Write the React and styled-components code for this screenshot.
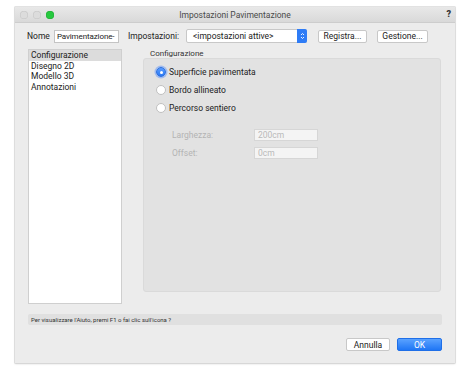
import React from 'react';
import styled, { createGlobalStyle } from 'styled-components';

const Global = createGlobalStyle`
  html, body { margin: 0; padding: 0; background: #ffffff; }
  body { font-family: Roboto, "Liberation Sans", sans-serif; color: #222; }
`;

const Page = styled.div`
  width: 468px;
  height: 373px;
  padding: 7px 0 0 15px;
  box-sizing: border-box;
`;

const Window = styled.div`
  width: 440px;
  height: 356px;
  background: #ececec;
  display: flex;
  flex-direction: column;
  box-shadow: 0 0 0 0.5px #c8c8c8, 0 1px 2px rgba(0, 0, 0, 0.15);
`;

const TitleBar = styled.div`
  height: 15px;
  flex-shrink: 0;
  display: flex;
  align-items: center;
  position: relative;
  background: linear-gradient(#e8e8e8, #d9d9d9);
  border-bottom: 1px solid #cdcdcd;
  padding-left: 5px;
  gap: 5px;
`;

const Light = styled.span`
  width: 8px;
  height: 8px;
  border-radius: 50%;
  background: ${(p) => p.$color};
  box-shadow: inset 0 0 0 0.5px ${(p) => p.$edge};
`;

const Title = styled.div`
  position: absolute;
  left: 0;
  right: 0;
  text-align: center;
  font-size: 8.5px;
  color: #4a4a4a;
  pointer-events: none;
`;

const HelpMark = styled.span`
  position: absolute;
  right: 4px;
  top: 2px;
  font-size: 9px;
  font-weight: 900;
  color: #333;
`;

const Body = styled.div`
  flex: 1;
  display: flex;
  flex-direction: column;
  padding: 6px 12px 0 12px;
`;

const TopRow = styled.div`
  display: flex;
  align-items: center;
  height: 14px;
  font-size: 8.5px;
`;

const Label = styled.span`
  color: #222;
  margin-left: ${(p) => p.$ml || 0}px;
  margin-right: ${(p) => p.$gap || 0}px;
`;

const TextBox = styled.div`
  width: ${(p) => p.$w}px;
  height: 13px;
  background: #fff;
  border: 1px solid #c4c4c4;
  box-sizing: border-box;
  display: flex;
  align-items: center;
  padding-left: 2px;
  font-size: 8px;
  letter-spacing: -0.1px;
  overflow: hidden;
  white-space: nowrap;
`;

const Select = styled.div`
  width: 121px;
  height: 14px;
  margin-left: 7px;
  background: #fff;
  border: 1px solid #c8c8c8;
  border-radius: 2px;
  box-sizing: border-box;
  display: flex;
  align-items: center;
  font-size: 8.5px;
  padding-left: 6px;
  position: relative;
`;

const Stepper = styled.span`
  position: absolute;
  right: -1px;
  top: -1px;
  bottom: -1px;
  width: 10px;
  background: #2f7cf6;
  border-radius: 0 2px 2px 0;
  display: flex;
  align-items: center;
  justify-content: center;
`;

const PushButton = styled.div`
  height: 13px;
  width: ${(p) => p.$w}px;
  margin-left: ${(p) => p.$ml}px;
  background: ${(p) => (p.$primary ? 'linear-gradient(#5aa2ff, #1f76f5)' : '#fff')};
  color: ${(p) => (p.$primary ? '#fff' : '#222')};
  border: 1px solid ${(p) => (p.$primary ? '#1f6fe8' : '#c8c8c8')};
  border-radius: 2px;
  box-sizing: border-box;
  display: flex;
  align-items: center;
  justify-content: center;
  font-size: 8.5px;
`;

const Main = styled.div`
  display: flex;
  margin-top: 6px;
`;

const List = styled.div`
  width: 94px;
  height: 255px;
  margin-left: 1px;
  background: #fff;
  border: 1px solid #cfcfcf;
  box-sizing: border-box;
  font-size: 8.5px;
`;

const ListItem = styled.div`
  height: 10.5px;
  line-height: 10.5px;
  padding-left: 2px;
  background: ${(p) => (p.$selected ? '#dcdcdc' : 'transparent')};
`;

const RightCol = styled.div`
  margin-left: 21px;
  display: flex;
  flex-direction: column;
`;

const GroupLabel = styled.div`
  font-size: 8px;
  height: 9px;
  line-height: 9px;
  padding-left: 7px;
  color: #333;
`;

const Group = styled.div`
  width: 298px;
  height: 234px;
  background: #e2e2e2;
  border-radius: 3px;
  border: 1px solid #dadada;
  box-sizing: border-box;
  padding: 8px 0 0 12px;
  display: flex;
  flex-direction: column;
`;

const RadioRow = styled.div`
  display: flex;
  align-items: center;
  height: 10px;
  margin-bottom: 8px;
  font-size: 8.5px;
`;

const Radio = styled.span`
  width: 10px;
  height: 10px;
  border-radius: 50%;
  box-sizing: border-box;
  margin-right: 3px;
  display: flex;
  align-items: center;
  justify-content: center;
  background: ${(p) => (p.$on ? 'linear-gradient(#5a9dff, #2a78f3)' : '#fff')};
  border: 1px solid ${(p) => (p.$on ? '#2a6fe0' : '#c0c0c0')};
  box-shadow: ${(p) => (p.$on ? '0 0 0 1.5px rgba(80,140,255,0.45)' : 'none')};
  &::after {
    content: '';
    width: 3px;
    height: 3px;
    border-radius: 50%;
    background: #fff;
    display: ${(p) => (p.$on ? 'block' : 'none')};
  }
`;

const Spacer = styled.div`
  height: ${(p) => p.$h}px;
`;

const FieldRow = styled.div`
  display: flex;
  align-items: center;
  height: 12px;
  margin-left: 16px;
  margin-bottom: 6px;
  font-size: 8.5px;
  color: #b4b4b4;
`;

const FieldLabel = styled.span`
  width: 82px;
`;

const DisabledBox = styled.div`
  width: 64px;
  height: 12px;
  background: #f4f4f4;
  border: 1px solid #d6d6d6;
  box-sizing: border-box;
  padding-left: 3px;
  display: flex;
  align-items: center;
  color: #b9b9b9;
`;

const HelpBar = styled.div`
  margin: 10px 0 0 1px;
  width: 414px;
  height: 11px;
  background: #e0e0e0;
  border-radius: 2px;
  font-size: 6px;
  padding-left: 3px;
  box-sizing: border-box;
  display: flex;
  align-items: center;
  color: #333;
`;

const Footer = styled.div`
  display: flex;
  justify-content: flex-end;
  margin-top: 13px;
  width: 415px;
`;

export default function App() {
  return (
    <Page>
      <Global />
      <Window>
        <TitleBar>
          <Light $color="#dcdcdc" $edge="#c4c4c4" />
          <Light $color="#dcdcdc" $edge="#c4c4c4" />
          <Light $color="#27c93f" $edge="#1ea832" />
          <Title>Impostazioni Pavimentazione</Title>
          <HelpMark>?</HelpMark>
        </TitleBar>
        <Body>
          <TopRow>
            <Label $gap={4}>Nome</Label>
            <TextBox $w={65}>Pavimentazione-</TextBox>
            <Label $ml={9}>Impostazioni:</Label>
            <Select>
              &lt;impostazioni attive&gt;
              <Stepper>
                <svg width="5" height="8" viewBox="0 0 5 8">
                  <path d="M1 3 L2.5 1.5 L4 3 M1 5 L2.5 6.5 L4 5" stroke="#fff" strokeWidth="0.9" fill="none" />
                </svg>
              </Stepper>
            </Select>
            <PushButton $w={49} $ml={11}>Registra...</PushButton>
            <PushButton $w={51} $ml={10}>Gestione...</PushButton>
          </TopRow>
          <Main>
            <List>
              <ListItem $selected>Configurazione</ListItem>
              <ListItem>Disegno 2D</ListItem>
              <ListItem>Modello 3D</ListItem>
              <ListItem>Annotazioni</ListItem>
            </List>
            <RightCol>
              <GroupLabel>Configurazione</GroupLabel>
              <Group>
                <RadioRow>
                  <Radio $on />
                  Superficie pavimentata
                </RadioRow>
                <RadioRow>
                  <Radio />
                  Bordo allineato
                </RadioRow>
                <RadioRow>
                  <Radio />
                  Percorso sentiero
                </RadioRow>
                <Spacer $h={8} />
                <FieldRow>
                  <FieldLabel>Larghezza:</FieldLabel>
                  <DisabledBox>200cm</DisabledBox>
                </FieldRow>
                <FieldRow>
                  <FieldLabel>Offset:</FieldLabel>
                  <DisabledBox>0cm</DisabledBox>
                </FieldRow>
              </Group>
            </RightCol>
          </Main>
          <HelpBar>Per visualizzare l'Aiuto, premi F1 o fai clic sull'icona ?</HelpBar>
          <Footer>
            <PushButton $w={44} $ml={0}>Annulla</PushButton>
            <PushButton $w={45} $ml={7} $primary>OK</PushButton>
          </Footer>
        </Body>
      </Window>
    </Page>
  );
}
